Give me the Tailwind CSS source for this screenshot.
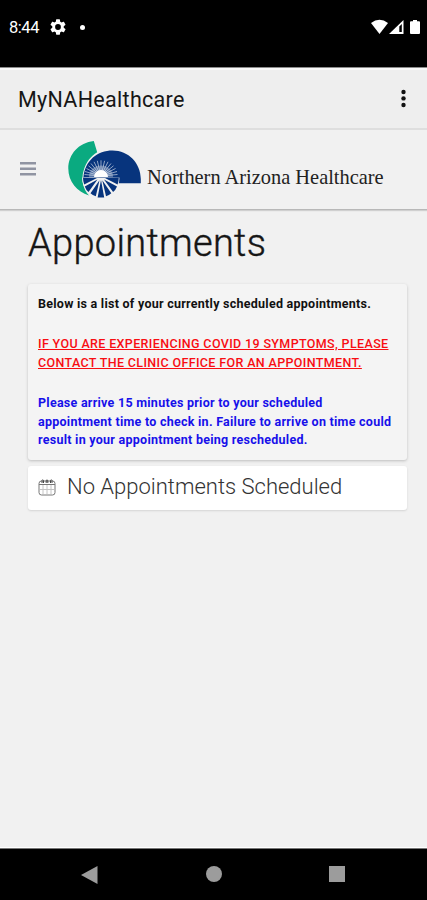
<!DOCTYPE html>
<html lang="en-US">

<head>
  <meta charset="UTF-8">
  <meta name="viewport" content="width=device-width, initial-scale=1.0">
  <title>MyNAHealthcare - Appointments</title>
  <script src="https://cdn.jsdelivr.net/npm/@tailwindcss/browser@4"></script>
</head>

<body class="bg-[#f1f1f1] font-[Roboto,sans-serif]">
  <div class="flex flex-col h-[900px] w-full overflow-hidden">

    <!-- Status bar -->
    <div class="flex h-[67px] shrink-0 items-start bg-black pl-[9px] pr-[7px] text-white">
      <span class="mt-[17px] text-[16.5px] leading-[22px] w-[41px] tracking-[-0.45px]">8:44</span>
      <svg class="mt-[19px] h-4 w-4" viewBox="2 2 20 20" fill="#fff">
        <path fill-rule="evenodd" d="M19.14 12.94c.04-.3.06-.61.06-.94s-.02-.64-.07-.94l2.03-1.58a.49.49 0 0 0 .12-.61l-1.92-3.32a.49.49 0 0 0-.59-.22l-2.39.96a7 7 0 0 0-1.62-.94L14.4 2.8a.48.48 0 0 0-.48-.41h-3.84a.48.48 0 0 0-.47.41l-.36 2.55c-.59.24-1.13.57-1.62.94l-2.39-.96a.48.48 0 0 0-.59.22L2.74 8.87a.48.48 0 0 0 .12.61l2.03 1.58a6 6 0 0 0 0 1.88l-2.03 1.58a.49.49 0 0 0-.12.61l1.92 3.32c.12.22.37.29.59.22l2.39-.96c.5.38 1.03.7 1.62.94l.36 2.55c.05.24.24.41.48.41h3.84c.24 0 .44-.17.47-.41l.36-2.55a7 7 0 0 0 1.62-.94l2.39.96c.22.08.47 0 .59-.22l1.92-3.32a.48.48 0 0 0-.12-.61zM12 15.6a3.6 3.6 0 1 1 0-7.2 3.6 3.6 0 0 1 0 7.2z" />
      </svg>
      <span class="ml-[14px] mt-[25px] h-[5px] w-[5px] rounded-full bg-white"></span>
      <div class="ml-auto mt-[19px] flex">
        <svg class="h-4 w-[17px]" viewBox="0 0 17 16" fill="#fff">
          <path d="M0 4Q8.5-2.6 17 4L8.5 15z" />
        </svg>
        <svg class="ml-[1px] h-4 w-[15px]" viewBox="0 0 15 16">
          <path d="M0 15L14.5 1V15z" fill="#fff" />
          <path d="M10.3 7.5L12.8 5V13h-2.5z" fill="#000" />
        </svg>
        <svg class="ml-[6px] h-4 w-[10px]" viewBox="0 0 10 16" fill="#fff">
          <path d="M3 1h4v1.2h2q1 0 1 1V14q0 1-1 1H1q-1 0-1-1V3.200q0-1 1-1h2z" />
        </svg>
      </div>
    </div>

    <!-- App bar -->
    <header class="flex h-[63px] shrink-0 items-center border-t border-b-2 border-t-[#8c8c8c] border-b-[#dedede] bg-[#eeeeee] pl-[18px] pr-[19px] shadow-[inset_0_2px_0_#f8f8f8]">
      <span class="mt-[4px] text-[21.5px] whitespace-nowrap text-[#161616] tracking-[0.3px]">MyNAHealthcare</span>
      <svg class="ml-auto h-5 w-[9px]" viewBox="0 0 9 20" fill="#111">
        <circle cx="4.500" cy="4" r="2.200" />
        <circle cx="4.500" cy="10.400" r="2.200" />
        <circle cx="4.500" cy="17" r="2.200" />
      </svg>
    </header>

    <!-- Site header -->
    <div class="z-10 flex h-[80px] shrink-0 items-start border-b border-[#b8b8b8] pl-5 shadow-[0_1px_1px_#d0d0d0]">
      <svg class="mt-[32px] h-4 w-4" viewBox="0 0 16 16" fill="#9094a2">
        <path d="M0 0h16v2.500H0zM0 5.500h16v2.500H0zM0 11h16v2.500H0z" />
      </svg>
      <svg class="ml-[32px] mt-[10px] h-[60px] w-[74px]" viewBox="68 140 74 60">
        <path d="M93.800 140.900C79 142.500 68.300 154 68.300 168.500C68.300 181.500 77 191.500 89 195.500C83 189 81 180 83.500 171C86 162 91 156 97.200 152.300Z" fill="#0aaa80" />
        <path d="M83.500 177C85 160.500 97.500 150.400 112.500 150.400C128.500 150.400 140.800 163 140.800 179V183.300H112L100 178Z" fill="#07347d" />
        <path d="M82.200 178.500A18.600 18.600 0 0 0 119.400 178.500V177.500H82.400Z" fill="#f1f1f1" />
        <path d="M101 176L85 171.500M101 176L86.500 168.500M101 176L88.500 165.800M101 176L91 163.500M101 176L94 161.800M101 176L97.300 160.800M101 176V160.300M101 176L104.600 160.800M101 176L108 161.800M101 176L111 163.500M101 176L113.500 165.800M101 176L115.500 168.500M101 176L117 171.500M101 176L84.500 174.500M101 176L117.500 174.500" stroke="#fff" stroke-opacity=".7" stroke-width=".8" />
        <path d="M89 177A12 11.500 0 0 1 113 177Z" fill="#fff" fill-opacity=".3" />
        <path d="M94 177A7 7 0 0 1 108 177Z" fill="#fff" />
        <path d="M97 178L83 177.500Q83 181.500 84.200 184.500ZM97.500 179.500L84.800 186.500Q86 190 88.500 192ZM99.500 180.300L90.500 193.200Q92.500 195.200 95.800 196.300ZM101 180L97.600 197.500H104.200ZM102.300 180.300L106 196.300Q109.200 195.200 111.300 193.200ZM104 179.500L113.100 192Q115.700 190 117 186.500ZM105 178L117.600 184.500Q118.800 181.500 118.800 177.500Z" fill="#07347d" />
      </svg>
      <span class="ml-[5px] mt-[34px] font-['Liberation_Serif',serif] text-[20.4px] leading-[26px] whitespace-nowrap text-[#222]">Northern Arizona Healthcare</span>
    </div>

    <main class="flex-1 border-b border-white bg-[#f1f1f1] pl-[28px] pr-5 pt-[8px]">
      <h1 class="text-[38px] leading-[50px] whitespace-nowrap text-[#161616] font-light tracking-[0.3px] [-webkit-text-stroke:0.4px_#161616]">Appointments</h1>

      <!-- Instructions -->
      <section class="mt-[16px] h-[176px] rounded-[3px] bg-[#f4f4f4] pl-[10px] pt-[10px] text-[12.5px] font-bold leading-[19px] whitespace-nowrap tracking-[0.26px] shadow-[0_1px_3px_#bdbdbd]">
        <p class="text-[#111]">Below is a list of your currently scheduled appointments.</p>
        <p class="mt-[21px] font-medium text-[#f80d12] underline tracking-[0.36px]">IF YOU ARE EXPERIENCING COVID 19 SYMPTOMS, PLEASE<br>CONTACT THE CLINIC OFFICE FOR AN APPOINTMENT.</p>
        <p class="mt-[22px] leading-[18.6px] text-[#1710ea]">Please arrive 15 minutes prior to your scheduled<br>appointment time to check in. Failure to arrive on time could<br>result in your appointment being rescheduled.</p>
      </section>

      <!-- Empty list -->
      <section class="mt-[6px] flex h-[44px] items-center rounded-[3px] bg-white pl-[10px] shadow-[0_1px_2px_#d4d4d4]">
        <svg class="mt-[-2px] h-[18px] w-[18px]" viewBox="0 0 18 18" fill="none" stroke="#777" stroke-width="1">
          <rect x="1" y="3" width="16" height="14" rx="2.500" />
          <path d="M1 6.500H17" />
          <path d="M5 7V16M9 7V16M13 7V16M2 11.500H16" stroke="#c4c4c4" />
          <path d="M4 5V2.500Q4.500 1 5.500 2.500V5M8.200 5V2.500Q9 1 9.800 2.500V5M12.500 5V2.500Q13.500 1 14 2.500V5" stroke="#444" />
        </svg>
        <span class="ml-[11px] mt-[-3px] text-[22px] font-light whitespace-nowrap text-[#333]">No Appointments Scheduled</span>
      </section>
    </main>

    <!-- Navigation bar -->
    <nav class="flex h-[52px] shrink-0 items-start border-t border-[#777] bg-black pl-[81px] pt-[17px]">
      <svg class="h-[18px] w-[17px]" viewBox="0 0 17 18" fill="#9c9c9c">
        <path d="M0 9L16.500 0V18z" />
      </svg>
      <span class="ml-[108px] h-4 w-4 rounded-full bg-[#9c9c9c]"></span>
      <span class="ml-[107px] h-4 w-4 bg-[#9c9c9c]"></span>
    </nav>
  </div>
</body>

</html>
